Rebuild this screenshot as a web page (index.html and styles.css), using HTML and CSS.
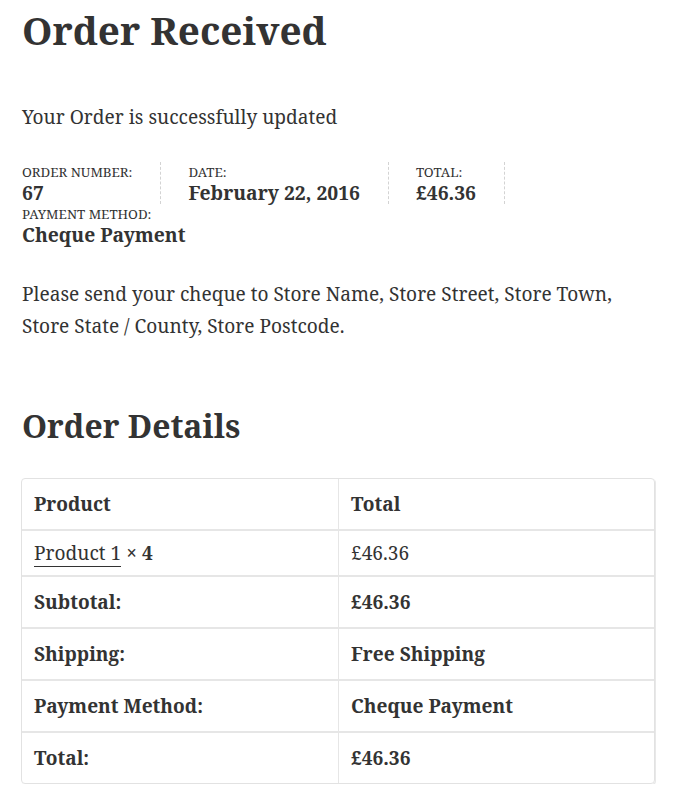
FILE: index.html
```html
<!DOCTYPE html>
<html>
<head>
<meta charset="utf-8">
<link rel="stylesheet" href="styles.css">
</head>
<body>
<main class="page">
  <h1 class="title">Order Received</h1>
  <p class="notice">Your Order is successfully updated</p>
  <ul class="order-details">
    <li class="od-item"><span class="od-label">Order Number:</span><strong class="od-value">67</strong></li>
    <li class="od-item"><span class="od-label">Date:</span><strong class="od-value">February 22, 2016</strong></li>
    <li class="od-item"><span class="od-label">Total:</span><strong class="od-value">£46.36</strong></li>
    <li class="od-item od-last"><span class="od-label">Payment Method:</span><strong class="od-value">Cheque Payment</strong></li>
  </ul>
  <p class="instructions">Please send your cheque to Store Name, Store Street, Store Town, Store State / County, Store Postcode.</p>
  <h2 class="section-title">Order Details</h2>
  <table class="shop-table">
    <thead>
      <tr><th class="c1">Product</th><th class="c2">Total</th></tr>
    </thead>
    <tbody>
      <tr class="item-row"><td class="c1"><a class="plink" href="#">Product 1</a> <strong class="qty">× 4</strong></td><td class="c2">£46.36</td></tr>
    </tbody>
    <tfoot>
      <tr><th class="c1">Subtotal:</th><td class="c2 b">£46.36</td></tr>
      <tr><th class="c1">Shipping:</th><td class="c2 b">Free Shipping</td></tr>
      <tr><th class="c1">Payment Method:</th><td class="c2 b">Cheque Payment</td></tr>
      <tr><th class="c1">Total:</th><td class="c2 b">£46.36</td></tr>
    </tfoot>
  </table>
</main>
</body>
</html>
```

FILE: styles.css
```css
html, body {
  margin: 0;
  padding: 0;
  background: #fff;
}
body {
  font-family: "Noto Serif", "DejaVu Serif", serif;
  color: #333;
  font-size: 19.1px;
  line-height: 32px;
}
.page {
  padding: 0 23px 0 22px;
}
.title {
  margin: 0;
  padding-top: 4px;
  font-size: 38.7px;
  line-height: 52px;
  font-weight: 700;
}
.notice {
  margin: 45px 0 0;
}
.order-details {
  list-style: none;
  margin: 29px 0 0;
  padding: 0;
  display: flow-root;
}
.od-item {
  float: left;
  margin-right: 27px;
  padding-right: 28px;
  border-right: 1px dashed #d3d3d3;
  font-size: 13.3px;
  line-height: 20px;
  text-transform: uppercase;
}
.od-last {
  border-right: 0;
}
.od-label {
  display: block;
}
.od-value {
  display: block;
  font-size: 19.3px;
  line-height: 22px;
  text-transform: none;
}
.instructions {
  margin: 32px 0 0;
  line-height: 32px;
}
.section-title {
  margin: 60px 0 0;
  font-size: 31.9px;
  line-height: 48px;
  font-weight: 700;
}
.shop-table {
  margin: 28px 0 0 -1px;
  width: 634px;
  border-collapse: separate;
  border-spacing: 0;
  border: 1px solid #e2e2e2;
  border-radius: 4px;
  box-shadow: 1px 1px 0 #e8e8e8;
}
.shop-table th, .shop-table td {
  text-align: left;
  padding: 11px 12px;
  border-top: 1px solid #e6e6e6;
  line-height: 28px;
  vertical-align: middle;
}
.shop-table thead th {
  border-top: 0;
}
.shop-table tbody td, .shop-table tfoot th, .shop-table tfoot td {
  border-top: 2px solid #e6e6e6;
}
.shop-table .c1 {
  width: 292px;
  border-right: 1px solid #e6e6e6;
}
.shop-table .b {
  font-weight: 700;
}
.item-row td {
  padding-top: 8px;
  padding-bottom: 8px;
}
.plink {
  color: #333;
  text-decoration: none;
  border-bottom: 1px solid #333;
}
```
